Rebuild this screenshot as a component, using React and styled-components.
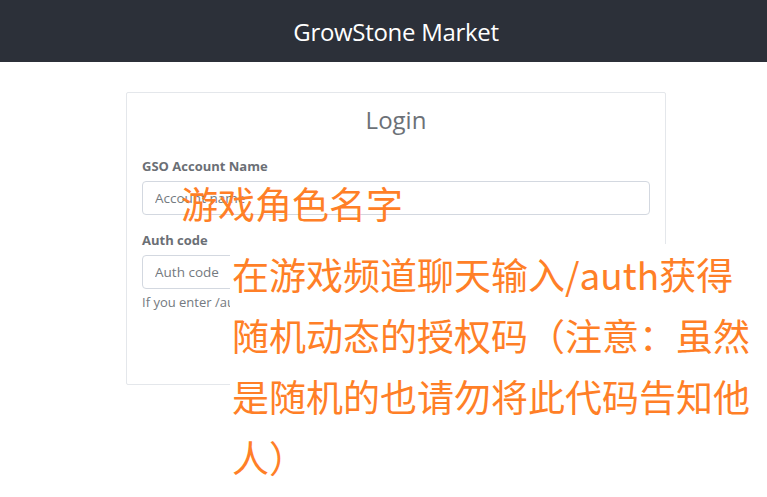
import React from 'react';
import styled, { createGlobalStyle } from 'styled-components';

const GlobalStyle = createGlobalStyle`
    html, body {
        margin: 0;
        padding: 0;
        background: #ffffff;
        overflow: hidden;
    }
    body {
        font-family: "Open Sans", "Noto Sans", sans-serif;
    }
`

const Page = styled.div`
    position: relative;
    width: 792px;
    height: 497px;
    background: #ffffff;
`

const Header = styled.header`
    height: 62px;
    background: #2c3039;
    display: flex;
    align-items: center;
    justify-content: center;
    h1 {
        margin: 0;
        color: #ffffff;
        font-size: 24px;
        font-weight: 400;
        letter-spacing: -0.3px;
    }
`

const Card = styled.div`
    width: 540px;
    margin: 30px auto 0;
    box-sizing: border-box;
    height: 293px;
    border: 1px solid #e4e7eb;
    border-radius: 2px;
    padding: 12px 15px 0;
`

const Title = styled.h2`
    margin: 0 0 23px;
    text-align: center;
    font-size: 24px;
    font-weight: 400;
    line-height: 29px;
    color: #6c7177;
`

const Field = styled.div`
    display: flex;
    flex-direction: column;
    margin-bottom: 16px;
`

const Label = styled.label`
    font-size: 13px;
    line-height: 19px;
    font-weight: 700;
    color: #6b6f75;
    margin-bottom: 5px;
`

const Input = styled.input`
    height: 34px;
    box-sizing: border-box;
    border: 1px solid #d3d8e0;
    border-radius: 4px;
    padding: 0 12px;
    font-family: "Open Sans", "Noto Sans", sans-serif;
    font-size: 13.5px;
    color: #495057;
    outline: none;
    &::placeholder {
        color: #747a80;
    }
`

const Help = styled.small`
    display: block;
    margin-top: 4px;
    font-size: 13px;
    line-height: 18px;
    color: #747a80;
`

const Note = styled.div`
    position: absolute;
    left: ${p => p.$x}px;
    top: ${p => p.$y}px;
    width: ${p => p.$w ? `${p.$w}px` : 'auto'};
    bottom: ${p => p.$fill ? '0' : 'auto'};
    background: ${p => p.$fill ? '#ffffff' : 'transparent'};
    padding-left: ${p => p.$fill ? 2 : 0}px;
    font-family: "Microsoft YaHei", "Noto Sans CJK SC", sans-serif;
    font-size: 37px;
    line-height: 61px;
    color: #ff7f27;
    white-space: nowrap;
`

export default function App() {
    return (
        <Page>
            <GlobalStyle />
            <Header>
                <h1>GrowStone Market</h1>
            </Header>
            <Card>
                <Title>Login</Title>
                <Field>
                    <Label>GSO Account Name</Label>
                    <Input placeholder="Account name" />
                </Field>
                <Field>
                    <Label>Auth code</Label>
                    <Input placeholder="Auth code" />
                    <Help>If you enter /auth</Help>
                </Field>
            </Card>
            <Note $x={181} $y={173}>游戏角色名字</Note>
            <Note $x={230} $y={244} $w={540} $fill>
                在游戏频道聊天输入/auth获得<br />
                随机动态的授权码（注意：虽然<br />
                是随机的也请勿将此代码告知他<br />
                人）
            </Note>
        </Page>
    );
}
